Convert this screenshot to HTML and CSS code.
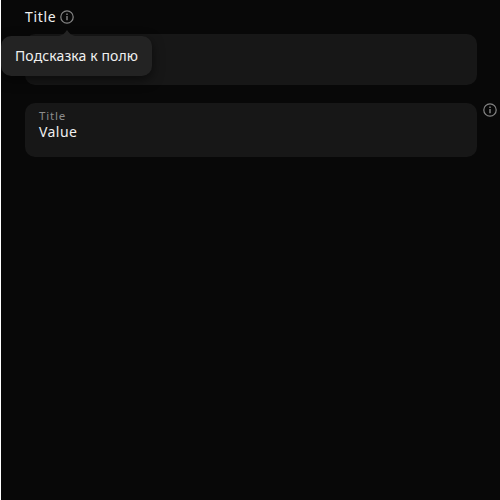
FILE: index.html
```
<!DOCTYPE html>
<html lang="ru"><head><meta charset="utf-8"><title>Text field</title><link rel="stylesheet" href="styles.css"></head>
<body>
<main class="page">
<section class="field">
<div class="label"><span class="label-text">Title</span><span class="anchor"><svg class="icon" viewBox="0 0 16 16"><circle cx="8" cy="8" r="6.2"/><path d="M8 7v4.3M8 4.6v1.3"/></svg><span class="tooltip">Подсказка к полю</span></span></div>
<div class="box first"></div>
</section>
<section class="field second">
<div class="box inner"><span class="caption">Title</span><span class="value">Value</span></div>
<svg class="icon outer" viewBox="0 0 16 16"><circle cx="8" cy="8" r="6.2"/><path d="M8 7v4.3M8 4.6v1.3"/></svg>
</section>
</main>
</body></html>
```
FILE: styles.css
```
* { box-sizing: border-box; }
body { margin: 0; background: #080808; color: #f0f0f0; font: 14px/18px "Noto Sans", sans-serif; }
.page { height: 500px; padding: 8px 23px 0 24px; border-left: 1px solid #fff; overflow: hidden; }
.label { display: flex; align-items: center; height: 18px; }
.label-text { width: 34px; letter-spacing: .7px; }
.anchor { position: relative; display: flex; }
.icon { width: 16px; height: 16px; fill: none; stroke: #858585; stroke-width: 1.2; }
.icon path { stroke-width: 1.4; }
.box { background: #171717; border-radius: 10px; }
.first { height: 51px; margin-top: 8px; }
.second { position: relative; margin-top: 18px; }
.inner { height: 54px; padding: 6px 14px; display: flex; flex-direction: column; }
.caption { font-size: 11.5px; line-height: 14px; letter-spacing: .8px; color: #8c8c8c; }
.value { line-height: 18px; letter-spacing: .45px; }
.outer { position: absolute; top: -1px; right: -21px; }
.tooltip { position: absolute; z-index: 1; left: -58px; top: 27px; width: 151px; height: 40px; padding: 11px 14px; border-radius: 10px; background: #232323; white-space: nowrap; letter-spacing: .1px; box-shadow: 0 4px 12px #0008; }
.tooltip::before { content: ""; position: absolute; left: 58px; top: -6px; width: 16px; height: 6px; background: #232323; clip-path: polygon(50% 0, 62% 40%, 75% 75%, 100% 100%, 0 100%, 25% 75%, 38% 40%); }
```
